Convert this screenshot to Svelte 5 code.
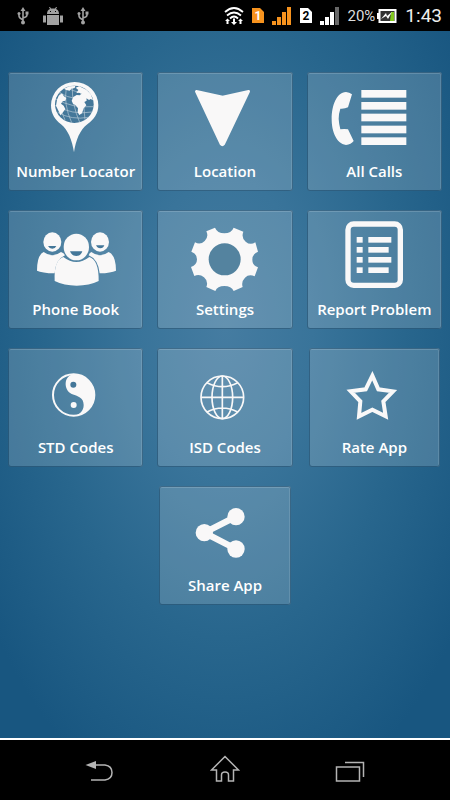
<script lang="ts">
    type Tile = { id: string; label: string; viewBox: string; narrow?: boolean };

    const tiles: Tile[] = [
        { id: "locator", label: "Number Locator", viewBox: "92 36 270 252" },
        { id: "location", label: "Location", viewBox: "90 36 270 252" },
        { id: "calls", label: "All Calls", viewBox: "86 36 270 252" },
        { id: "phonebook", label: "Phone Book", viewBox: "92 30 270 252" },
        { id: "settings", label: "Settings", viewBox: "90 30 270 252" },
        { id: "report", label: "Report Problem", viewBox: "86 30 270 252" },
        { id: "std", label: "STD Codes", viewBox: "92 24 270 252" },
        { id: "isd", label: "ISD Codes", viewBox: "540 24 270 252" },
        { id: "rate", label: "Rate App", viewBox: "314 24 270 252", narrow: true },
        { id: "share", label: "Share App", viewBox: "90 33 270 252", narrow: true },
    ];

    const callRows = [90, 126, 161, 197, 232];
    const reportRows = [
        { y: 111, width: 69 },
        { y: 141, width: 61 },
        { y: 171, width: 69 },
        { y: 202, width: 61 },
    ];
</script>

{#snippet usb()}
    <svg class="usb" viewBox="0 0 12 18" aria-hidden="true">
        <path d="M6 3v12M2 7v2q0 2 4 4M10 6v2q0 2-4 3" fill="none" stroke="#a2a2a2" stroke-width="1.6" />
        <path d="M3.500 4 6 0l2.500 4z" fill="#a2a2a2" />
        <circle cx="6" cy="15.500" r="2" fill="#a2a2a2" />
        <circle cx="2" cy="6.500" r="1.500" fill="#a2a2a2" />
        <path d="M8.500 4.500h3v3h-3z" fill="#a2a2a2" />
    </svg>
{/snippet}

{#snippet icon(id: string)}
    {#if id === "locator"}
        <path d="M223 66a71 70 0 0 1 71 70c0 26-14 43-33 57-22 16-35 49-40 84-5-35-18-68-39-84-18-14-30-31-30-57a71 70 0 0 1 71-70z" />
        <ellipse class="hole" cx="222" cy="133" rx="58" ry="56" />
        <g class="grid">
            <path d="M180 96q-8 38 14 84M198 84q-9 48 16 104M216 78q-2 54 22 109M236 79q18 50 18 100M166 117q50 28 112 23M165 136q50 30 110 20M172 157q42 24 92 15M182 101q38 21 93 14M202 84q31 18 63 12" />
        </g>
        <path d="M175 107l10-7 5 8 8 6-3 8-8 2-5 7 8 6 5 10-7 10-8 9-4-10-9-19 3-18zM191 86l16-7 18-1-2 6-10 2-5 6-10-2zM226 83l11-4 21 10 13 13 7 19-7-4-5 3-8-6 1 8-7 4 6 10-8 9-5 15-8 5-5-8 1-12-7-9-8-5-4-9 5-11 10-6 9 1 6-5-8-3-8 1 6-9z" />
    {:else if id === "location"}
        <path class="round" d="M139 94 218 111 296 94 221 252Q217 257 213 252Z" />
    {:else if id === "calls"}
        <path d="M137 96q10 1 18 7l-12 39q-10 5-23 4-5 15-5 31 1 16 5 31 12-2 23 0l17 35q-8 11-23 12c-30-5-43-42-43-78 0-40 14-79 43-81z" />
        {#each callRows as y}
            <rect x="183" {y} width="135" height="23" />
        {/each}
    {:else if id === "phonebook"}
        <ellipse cx="156" cy="126" rx="27" ry="29" />
        <ellipse cx="299" cy="126" rx="27" ry="29" />
        <path d="M130 156q26 20 52 0 9 3 12 10-28 12-31 54-39-1-53-8 0-47 20-56zM273 156q26 20 52 0 22 10 22 56-15 7-49 8-5-43-33-54 2-7 8-10z" />
        <ellipse cx="228" cy="141" rx="38" ry="40" />
        <path d="M189 171q39 30 78 0c18 5 29 29 28 72q-28 14-66 14t-66-14c-2-44 8-67 26-72z" />
        <path class="hole" d="M143 138h25q-3 8-12 8t-13-8zM287 136h25q-3 9-12 9t-13-9zM209 154h37q-4 14-18 14t-19-14z" />
    {:else if id === "settings"}
        <path d="M195 83q7 17 28 17t28-17l29 12q-7 18 7 30t29 2l8 28q-17 7-17 24t17 23l-10 27q-17-8-29 4t-7 28l-27 12q-7-15-28-15t-27 15l-27-12q7-17-7-29t-29-4l-10-27q18-6 18-23t-17-23l11-28q16 9 29-4t5-29z" />
        <circle class="hole light" cx="224" cy="178" r="48" />
    {:else if id === "report"}
        <rect class="line" x="143" y="72" width="157" height="184" rx="17" stroke-width="16" />
        {#each reportRows as row}
            <rect x="169" y={row.y} width="18" height="17" />
            <rect x="204" y={row.y} width={row.width} height="17" />
        {/each}
    {:else if id === "std"}
        <circle class="line" cx="220" cy="165" r="62" stroke-width="6" />
        <path d="M220 103a62 62 0 0 1 0 124C238 224 250 213 250 195 250 172 232 169 214 162 188 150 190 106 220 103z" />
        <circle class="hole" cx="219" cy="134" r="9" />
        <circle cx="220" cy="195" r="9" />
    {:else if id === "isd"}
        <g class="line" stroke-width="5">
            <circle cx="667" cy="172" r="64" />
            <ellipse cx="667" cy="172" rx="31" ry="64" />
            <path d="M603 172h128M667 108v128M621 128q46 24 92 0M621 216q46-24 92 0" />
        </g>
    {:else if id === "rate"}
        <path class="line" d="M444 107 462 148 506 154 477 184 484 229 444 209 404 229 408 184 379 154 424 148Z" stroke-width="12" />
    {:else if id === "share"}
        <path class="line" d="M258 125 163 173 258 222" stroke-width="19" />
        <circle cx="258" cy="125" r="26" />
        <circle cx="163" cy="173" r="26" />
        <circle cx="258" cy="222" r="26" />
    {/if}
{/snippet}

<div class="screen">
    <header class="status">
        <div class="notices">
            {@render usb()}
            <svg class="robot" viewBox="0 0 20 18" fill="#a2a2a2" aria-hidden="true">
                <path d="M4 7q0-4 3-5L6 0h1l1 1.500h4L13 0h1l-1 2q3 1 3 5zM4 8h12v10H4zM0 8.500h3v7H0zM17 8.500h3v7h-3z" />
                <path d="M7 4h1v1H7zM12 4h1v1h-1z" fill="#000" />
            </svg>
            {@render usb()}
        </div>
        <div class="signals">
            <svg class="wifi" viewBox="0 0 20 18" aria-hidden="true">
                <path d="M1 5q9-8 18 0M3 8.500q7-6 14 0M6 11.500q4-4 8 0" fill="none" stroke="#fff" stroke-width="1.8" />
                <path d="M9 11.500h2V15h2l-3 3-3-3h2zM1 14l2.500-2.500L6 14H4.500v3h-2v-3zM14 14l2.500-2.500L19 14h-1.500v3h-2v-3z" fill="#fff" />
            </svg>
            <svg class="sim" viewBox="0 0 12 15" aria-hidden="true">
                <path d="M0 0h8l4 4v11H0z" fill="#f7931e" />
                <text x="6" y="12" fill="#fff">1</text>
            </svg>
            <svg class="bars" viewBox="0 0 20 18" fill="#f7931e" aria-hidden="true">
                <path d="M0 14h4v4H0zM5 10h4v8H5zM10 5h4v13h-4zM15 0h4v18h-4z" />
            </svg>
            <svg class="sim" viewBox="0 0 12 15" aria-hidden="true">
                <path d="M0 0h8l4 4v11H0z" fill="#fff" />
                <text x="6" y="12" fill="#000">2</text>
            </svg>
            <svg class="bars" viewBox="0 0 20 18" fill="#fff" aria-hidden="true">
                <path d="M0 14h4v4H0zM5 10h4v8H5zM10 5h4v13h-4z" />
                <path d="M15 0h4v18h-4z" fill="#686868" />
            </svg>
            <span class="percent">20%</span>
            <svg class="battery" viewBox="0 0 20 14" aria-hidden="true">
                <path d="M0 4h2v6H0z" fill="#fff" />
                <rect x="2.500" y="1" width="16" height="12" fill="#333" stroke="#fff" stroke-width="2" />
                <path d="M14 3h3v9h-4z" fill="#82c91e" />
                <path d="M4 10l5-6 1 3 5-4-4 7-2-3z" fill="#fff" />
            </svg>
            <time>1:43</time>
        </div>
    </header>

    <main>
        <div class="tiles">
            {#each tiles as tile}
                <button type="button" class="tile" class:narrow={tile.narrow} class:last={tile.id === "share"}>
                    <svg class="icon" viewBox={tile.viewBox} aria-hidden="true">
                        {@render icon(tile.id)}
                    </svg>
                    <span>{tile.label}</span>
                </button>
            {/each}
        </div>
    </main>

    <nav>
        <button type="button" aria-label="Back">
            <svg viewBox="0 0 30 30">
                <path d="M11 10h9q7 1 7 7.500T20 25H6" />
                <path d="M0.500 10 11 6v8z" fill="#b4b4b4" stroke="none" />
            </svg>
        </button>
        <button type="button" aria-label="Home">
            <svg viewBox="0 0 30 30">
                <path d="M15 1.500 1.500 15h5v11h5v-6q0-3 3.500-3t3.500 3v6h5V15h5z" />
            </svg>
        </button>
        <button type="button" aria-label="Recent apps">
            <svg viewBox="0 0 30 30">
                <path d="M1.500 12h23v14h-23zM10 7.500h18.500V22" />
            </svg>
        </button>
    </nav>
</div>

<style>
    :global(body) {
        margin: 0;
        background: #000;
    }
    .screen {
        display: flex;
        flex-direction: column;
        min-height: 100vh;
        font-family: "Open Sans", "Noto Sans", sans-serif;
        color: #fff;
    }
    button {
        padding: 0;
        border: 0;
        background: none;
        color: inherit;
        font: inherit;
        cursor: pointer;
    }
    svg {
        display: block;
        flex: none;
    }

    .status {
        display: flex;
        align-items: center;
        justify-content: space-between;
        height: 31px;
        padding: 0 8px 0 17px;
        background: #000;
        font-family: Roboto, sans-serif;
    }
    .notices,
    .signals {
        display: flex;
        align-items: center;
    }
    .notices {
        gap: 14px;
    }
    .signals {
        gap: 8px;
    }
    .usb {
        width: 12px;
        height: 18px;
    }
    .robot,
    .wifi,
    .bars {
        width: 20px;
        height: 18px;
    }
    .sim {
        width: 12px;
        height: 15px;
    }
    .sim text {
        font-size: 12px;
        font-weight: 700;
        text-anchor: middle;
    }
    .battery {
        width: 20px;
        height: 14px;
        margin-left: -6px;
    }
    .percent {
        font-size: 15px;
        color: #ddd;
    }
    time {
        font-size: 19px;
        color: #eee;
    }

    main {
        flex: 1;
        padding: 41px 8px;
        border-bottom: 2px solid #fff;
        background: radial-gradient(ellipse 290px 500px at 50% 42%, #457ca1 0%, #39749a 30%, #28668d 62%, #185680 100%);
    }
    .tiles {
        display: grid;
        grid-template-columns: repeat(3, 1fr);
        gap: 19px 14px;
    }
    .tile {
        display: flex;
        flex-direction: column;
        align-items: center;
        height: 119px;
        border-radius: 3px;
        background: rgba(255, 255, 255, 0.17);
        box-shadow:
            inset 0 0 0 1px rgba(10, 55, 90, 0.5),
            inset 0 2px rgba(255, 255, 255, 0.16),
            inset -2px 0 rgba(255, 255, 255, 0.12);
        font-size: 15px;
        font-weight: 600;
        line-height: 30px;
        white-space: nowrap;
    }
    .narrow {
        margin: 0 2px;
    }
    .last {
        grid-column: 2;
    }
    .icon {
        width: 90px;
        height: 84px;
        fill: #f9f8f8;
    }
    .icon .hole {
        fill: #447799;
    }
    .icon .light {
        fill: #54839f;
    }
    .icon .grid {
        fill: none;
        stroke: #b9ccd8;
        stroke-width: 2;
    }
    .icon .line {
        fill: none;
        stroke: #f9f8f8;
    }
    .icon .round {
        stroke: #f9f8f8;
        stroke-width: 8;
        stroke-linejoin: round;
    }

    nav {
        display: flex;
        justify-content: center;
        gap: 95px;
        height: 60px;
        background: #000;
    }
    nav button {
        display: grid;
        place-items: center;
    }
    nav svg {
        width: 30px;
        height: 30px;
        fill: none;
        stroke: #b4b4b4;
        stroke-width: 1.5;
    }
</style>
